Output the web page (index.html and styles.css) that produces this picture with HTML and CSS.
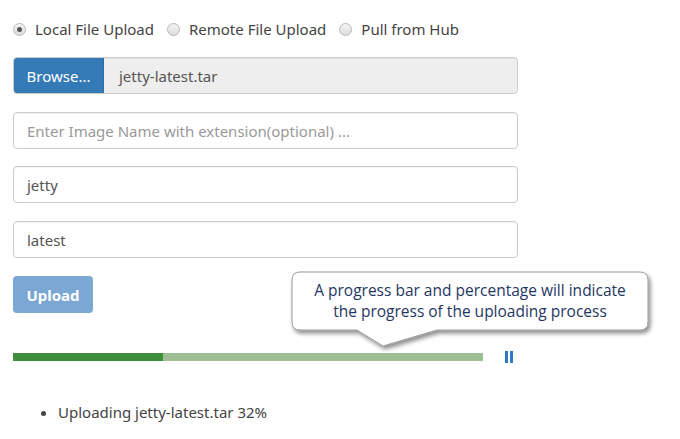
FILE: index.html
```html
<!DOCTYPE html>
<html>
<head>
<meta charset="utf-8">
<link rel="stylesheet" href="styles.css">
</head>
<body>
<div class="page">
  <div class="radios">
    <label class="radio"><span class="dot checked"></span>Local File Upload</label>
    <label class="radio"><span class="dot"></span>Remote File Upload</label>
    <label class="radio"><span class="dot"></span>Pull from Hub</label>
  </div>
  <div class="field group">
    <span class="browse">Browse...</span>
    <span class="filename">jetty-latest.tar</span>
  </div>
  <div class="field placeholder">Enter Image Name with extension(optional) ...</div>
  <div class="field tight">jetty</div>
  <div class="field">latest</div>
  <div class="upload-row">
    <span class="upload">Upload</span>
  </div>
  <div class="progress-row">
    <div class="bar"><div class="fill" style="width:32%"></div></div>
    <span class="pause"><i></i><i></i></span>
  </div>
  <ul class="status">
    <li>Uploading jetty-latest.tar 32%</li>
  </ul>
  <div class="callout">
    <svg class="callout-shape" width="372" height="90" viewBox="0 0 372 90">
      <defs>
        <filter id="sh" x="-10%" y="-10%" width="120%" height="130%">
          <feDropShadow dx="2" dy="3" stdDeviation="2" flood-color="#000" flood-opacity="0.45"/>
        </filter>
      </defs>
      <path filter="url(#sh)" d="M12 1 H352 Q360 1 360 9 V51 Q360 59 352 59 H149 L95 75 L69 59 H12 Q4 59 4 51 V9 Q4 1 12 1 Z" fill="#fff" stroke="#9a9a9a" stroke-width="1"/>
    </svg>
    <p class="callout-text">A progress bar and percentage will indicate<br>the progress of the uploading process</p>
  </div>
</div>
</body>
</html>
```
FILE: styles.css
```css
* { box-sizing: border-box; }
html, body { margin: 0; padding: 0; background: #fff; }
body {
  font-family: "Noto Sans", "Open Sans", sans-serif;
  font-size: 15px;
  color: #333;
}
.page {
  position: relative;
  width: 680px;
  height: 439px;
  padding: 18px 0 0 13px;
}
.radios {
  display: flex;
  align-items: center;
  height: 22px;
  gap: 13px;
}
.radio {
  display: flex;
  align-items: center;
  gap: 9px;
  color: #444;
}
.dot {
  width: 13px;
  height: 13px;
  border-radius: 50%;
  border: 1px solid #b8b8b8;
  background: linear-gradient(#f6f6f6, #dcdcdc);
  position: relative;
}
.dot.checked::after {
  content: "";
  position: absolute;
  left: 3px; top: 3px;
  width: 5px; height: 5px;
  border-radius: 50%;
  background: #555;
}
.field {
  width: 505px;
  height: 37px;
  border: 1px solid #ccc;
  border-radius: 4px;
  display: flex;
  align-items: center;
  padding-left: 13px;
  margin-top: 18px;
  color: #555;
  box-shadow: inset 0 1px 1px rgba(0,0,0,0.05);
}
.field.tight { margin-top: 17px; }
.group {
  margin-top: 17px;
  padding-left: 0;
  overflow: hidden;
  background: #eee;
}
.browse {
  background: #337ab7;
  color: #fff;
  height: 100%;
  width: 90px;
  display: flex;
  align-items: center;
  justify-content: center;
  border-right: 1px solid #2e6da4;
}
.filename {
  padding-left: 15px;
  color: #555;
}
.placeholder { color: #999; }
.upload-row { margin-top: 18px; height: 37px; }
.upload {
  display: inline-flex;
  align-items: center;
  justify-content: center;
  width: 80px;
  height: 37px;
  border-radius: 4px;
  background: #7aa7d3;
  color: #fff;
  font-weight: bold;
}
.progress-row {
  display: flex;
  align-items: center;
  margin-top: 38px;
  height: 12px;
}
.bar {
  width: 470px;
  height: 8px;
  background: #9dbe95;
}
.fill {
  height: 100%;
  background: #3e8e3c;
}
.pause {
  display: flex;
  gap: 2px;
  margin-left: 22px;
  height: 12px;
}
.pause i {
  display: block;
  width: 3px;
  height: 12px;
  background: #2f7ac6;
}
.status {
  margin: 38px 0 0;
  padding-left: 45px;
  color: #444;
}
.status li { line-height: 22px; }
.callout {
  position: absolute;
  left: 288px;
  top: 271px;
  width: 372px;
  height: 90px;
}
.callout-shape { position: absolute; left: 0; top: 0; }
.callout-text {
  position: relative;
  margin: 0;
  padding-top: 9px;
  padding-left: 4px;
  width: 360px;
  text-align: center;
  font-family: "Open Sans", "Noto Sans", sans-serif;
  font-size: 15.5px;
  line-height: 21px;
  color: #1f3763;
}
```
